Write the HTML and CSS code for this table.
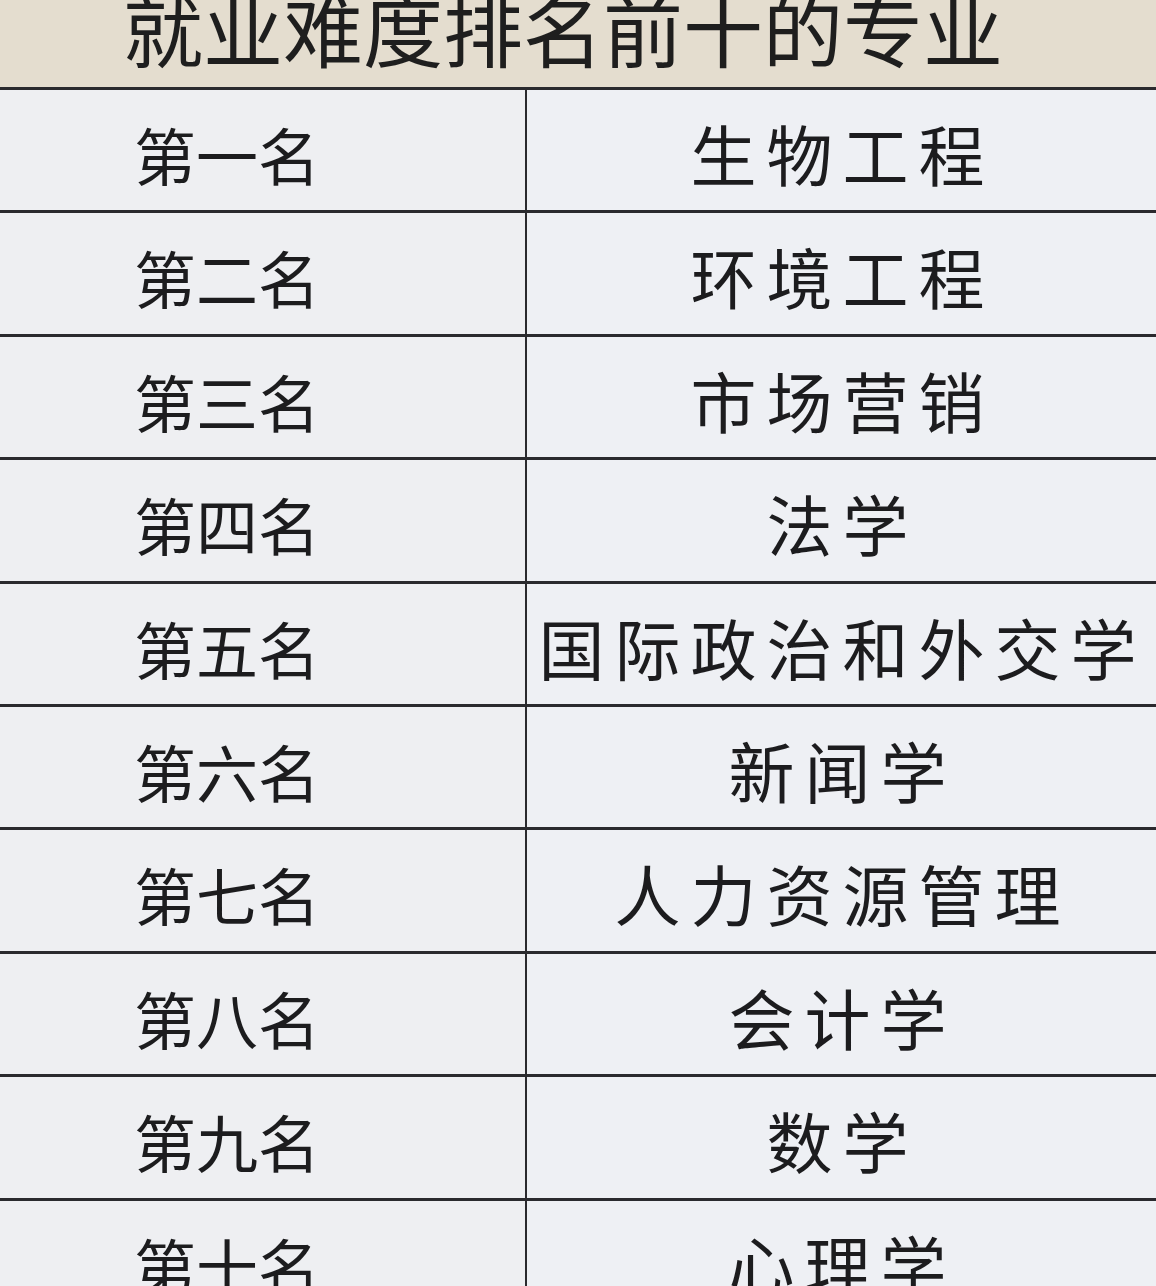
FILE: index.html
```html
<!DOCTYPE html>
<html lang="zh-CN">
<head>
<meta charset="utf-8">
<title>就业难度排名前十的专业</title>
<link rel="stylesheet" href="styles.css">
</head>
<body>
<div class="page">
  <header class="head"><h1 class="title">就业难度排名前十的专业</h1></header>
  <div class="table">
    <div class="row"><div class="rank">第一名</div><div class="major">生物工程</div></div>
    <div class="row"><div class="rank">第二名</div><div class="major">环境工程</div></div>
    <div class="row"><div class="rank">第三名</div><div class="major">市场营销</div></div>
    <div class="row"><div class="rank">第四名</div><div class="major">法学</div></div>
    <div class="row"><div class="rank">第五名</div><div class="major">国际政治和外交学</div></div>
    <div class="row"><div class="rank">第六名</div><div class="major">新闻学</div></div>
    <div class="row"><div class="rank">第七名</div><div class="major">人力资源管理</div></div>
    <div class="row"><div class="rank">第八名</div><div class="major">会计学</div></div>
    <div class="row"><div class="rank">第九名</div><div class="major">数学</div></div>
    <div class="row"><div class="rank">第十名</div><div class="major">心理学</div></div>
  </div>
</div>
</body>
</html>
```

FILE: styles.css
```css
html, body {
  margin: 0;
  padding: 0;
}
body {
  width: 1156px;
  height: 1286px;
  overflow: hidden;
  background: #eeeff3;
  font-family: "Noto Sans CJK SC", "Noto Sans", sans-serif;
  color: #1c1c1e;
}
.page {
  width: 1156px;
}
.head {
  height: 87px;
  background: #e4ddcf;
  overflow: hidden;
  display: flex;
  justify-content: center;
}
.title {
  margin: -14px 0 0 0;
  padding-right: 30px;
  font-size: 80px;
  line-height: 80px;
  font-weight: 400;
  white-space: nowrap;
  color: #1e1e1e;
}
.table {
  display: flex;
  flex-direction: column;
}
.row {
  box-sizing: border-box;
  height: 123.4px;
  border-top: 3px solid #2a2a2e;
  display: grid;
  grid-template-columns: 525px 2px 1fr;
  flex-shrink: 0;
}
.rank {
  grid-column: 1;
  padding-left: 134px;
  padding-top: 33px;
  font-size: 62px;
  line-height: 62px;
  white-space: nowrap;
  background: #eeeff2;
}
.major {
  grid-column: 3;
  border-left: 2px solid #2a2a2e;
  margin-left: -2px;
  text-align: center;
  padding-top: 29px;
  padding-left: 2px;
  font-size: 66px;
  line-height: 66px;
  letter-spacing: 10px;
  white-space: nowrap;
  background: #eef0f4;
}
```
